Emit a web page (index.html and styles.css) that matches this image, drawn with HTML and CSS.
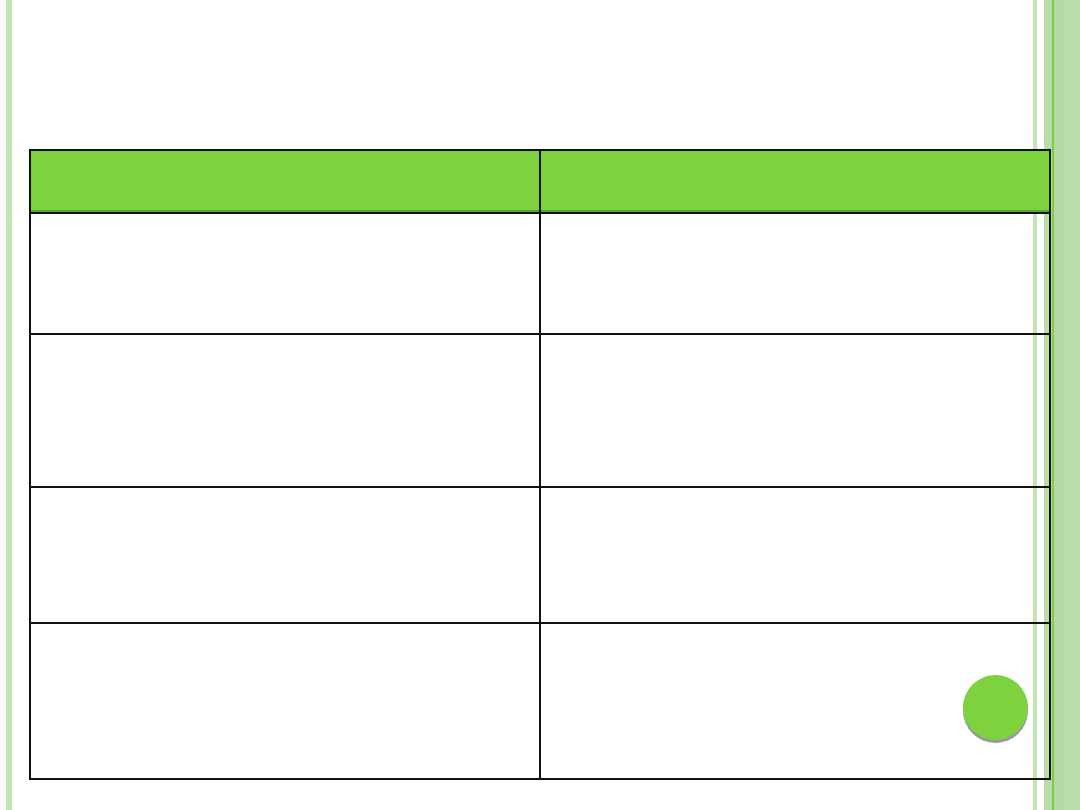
FILE: index.html
```html
<!DOCTYPE html>
<html>
<head>
<meta charset="utf-8">
<link rel="stylesheet" href="styles.css">
</head>
<body>
<div class="slide">
  <table class="grid">
    <tr class="head"><th></th><th></th></tr>
    <tr class="r1"><td></td><td></td></tr>
    <tr class="r2"><td></td><td></td></tr>
    <tr class="r3"><td></td><td></td></tr>
    <tr class="r4"><td></td><td></td></tr>
  </table>
  <div class="dot"></div>
</div>
</body>
</html>
```
FILE: styles.css
```css
html, body {
  margin: 0;
  padding: 0;
  background: #fff;
  font-family: "Liberation Sans", Arial, sans-serif;
}
.slide {
  position: relative;
  width: 1080px;
  height: 810px;
  overflow: hidden;
  box-sizing: border-box;
  padding: 149px 0 0 29px;
  background:
    linear-gradient(to right,
      #fff 0, #fff 6px,
      #c1e5b4 6px, #c1e5b4 12px,
      #fff 12px, #fff 1033px,
      #c1e5b4 1033px, #c1e5b4 1037px,
      #fff 1037px, #fff 1044px,
      #b9dcab 1044px, #b9dcab 1052px,
      #7ccf3c 1052px, #7ccf3c 1054px,
      #b5d8a7 1054px, #b5d8a7 1063px,
      #b9dcab 1063px, #b9dcab 1080px);
}
.grid {
  border-collapse: collapse;
  width: 1022px;
  table-layout: fixed;
}
.grid th, .grid td {
  border: 2px solid #111;
  padding: 0;
}
.grid th {
  background: #7ed23e;
  box-shadow: inset 0 -2px 0 #5aa72c;
}
.head th { height: 61px; }
.r1 td { height: 119px; }
.r2 td { height: 151px; }
.r3 td { height: 134px; }
.r4 td { height: 154px; }
.dot {
  position: absolute;
  left: 963px;
  top: 675px;
  width: 65px;
  height: 65px;
  border-radius: 50%;
  background: #7ed23e;
  box-shadow: 0 3px 0 #999;
}
```
